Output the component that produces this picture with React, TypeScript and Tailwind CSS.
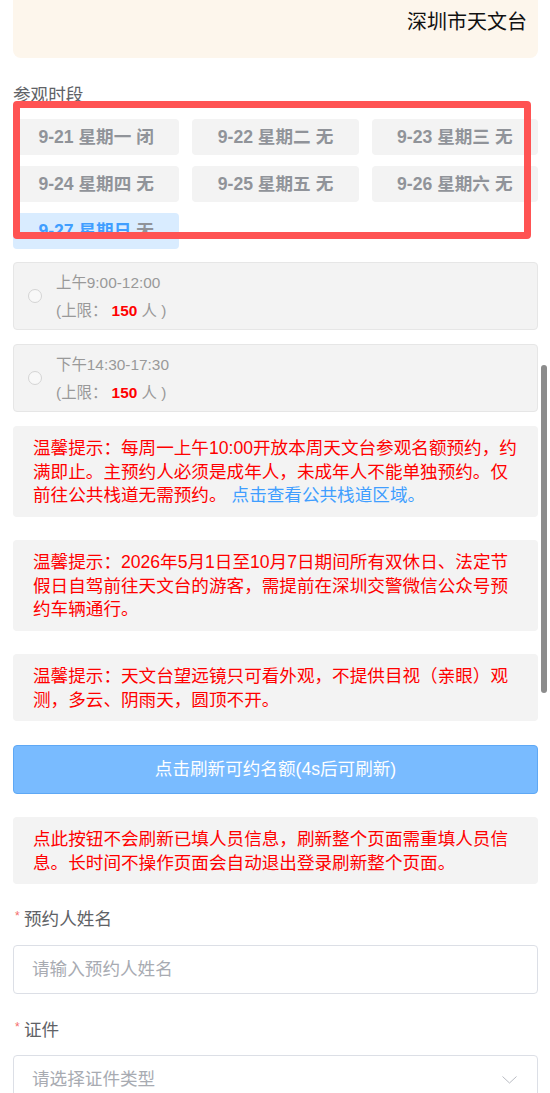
import React from 'react';

const days = [
  { date: '9-21', week: '星期一', state: '闭' },
  { date: '9-22', week: '星期二', state: '无' },
  { date: '9-23', week: '星期三', state: '无' },
  { date: '9-24', week: '星期四', state: '无' },
  { date: '9-25', week: '星期五', state: '无' },
  { date: '9-26', week: '星期六', state: '无' },
  { date: '9-27', week: '星期日', state: '无', active: true },
];

const slots = ['上午9:00-12:00', '下午14:30-17:30'];

function Notice({ children }: { children: React.ReactNode }) {
  return (
    <div className="rounded-[4px] bg-[#f3f3f3] pl-[20px] pr-[16px] pt-[11px] pb-[9px] text-[17.6px] leading-[23.5px] text-[#ff0000]">
      {children}
    </div>
  );
}

function Label({ text }: { text: string }) {
  return (
    <div className="flex items-center h-[24px] text-[17.6px] text-[#606266]">
      <span className="w-[11px] text-[12px] text-[#f56c6c] leading-none -mt-[6px] pl-[2px]">*</span>
      <span>{text}</span>
    </div>
  );
}

export default function App() {
  return (
    <div
      className="relative w-full h-[1093px] bg-white pl-[13px] pr-[12px] overflow-hidden"
      style={{ fontFamily: '"Liberation Sans", "Noto Sans CJK SC", sans-serif' }}
    >
      {/* header */}
      <div className="h-[58px] rounded-b-[8px] bg-[#fdf6ec] pt-[8px] pr-[11px] text-right text-[20px] leading-[28px] text-[#111]">
        深圳市天文台
      </div>

      <div className="mt-[25px] h-[24px] leading-[24px] text-[17.6px] text-[#606266]">参观时段</div>

      <div className="mt-[12px] grid grid-cols-3 gap-x-[13px] gap-y-[11px]">
        {days.map(d => (
          <div
            key={d.date}
            className={`h-[36px] rounded-[4px] flex items-center justify-center text-[17.6px] font-bold ${
              d.active ? 'bg-[#d9ecff] text-[#409eff]' : 'bg-[#f3f3f3] text-[#909399]'
            }`}
          >
            {d.date} {d.week} <span className="ml-[5px] text-[#909399]">{d.state}</span>
          </div>
        ))}
      </div>

      <div className="mt-[13px] flex flex-col gap-[14px]">
        {slots.map(s => (
          <div key={s} className="h-[68px] rounded-[4px] border border-[#e6e6e6] bg-[#f3f3f3] flex items-center pl-[14px]">
            <span className="w-[14px] h-[14px] rounded-full border border-[#d4d4d4] bg-[#f8f8f8]" />
            <div className="ml-[14px] text-[15.4px] text-[#999] leading-[28px] mt-[2px]">
              <div>{s}</div>
              <div>
                (上限： <span className="font-bold text-[#ff0000]">150</span> 人 )
              </div>
            </div>
          </div>
        ))}
      </div>

      <div className="mt-[14px] flex flex-col gap-[23.5px]">
        <Notice>
          温馨提示：每周一上午10:00开放本周天文台参观名额预约，约满即止。主预约人必须是成年人，未成年人不能单独预约。仅前往公共栈道无需预约。<span className="ml-[5px] text-[#409eff]">点击查看公共栈道区域。</span>
        </Notice>
        <Notice>
          温馨提示：2026年5月1日至10月7日期间所有双休日、法定节假日自驾前往天文台的游客，需提前在深圳交警微信公众号预约车辆通行。
        </Notice>
        <Notice>温馨提示：天文台望远镜只可看外观，不提供目视（亲眼）观测，多云、阴雨天，圆顶不开。</Notice>
        <button className="h-[49px] rounded-[4px] border border-[#5ea8f5] bg-[#79bbff] text-[17.6px] text-white">
          点击刷新可约名额(4s后可刷新)
        </button>
        <Notice>点此按钮不会刷新已填人员信息，刷新整个页面需重填人员信息。长时间不操作页面会自动退出登录刷新整个页面。</Notice>
      </div>

      <div className="mt-[23px]">
        <Label text="预约人姓名" />
        <div className="mt-[14px] h-[49px] rounded-[4px] border border-[#dcdfe6] flex items-center pl-[18px] text-[17.6px] text-[#a8abb2]">
          请输入预约人姓名
        </div>
      </div>

      <div className="mt-[24px]">
        <Label text="证件" />
        <div className="mt-[13px] h-[49px] rounded-[4px] border border-[#dcdfe6] flex items-center justify-between pl-[18px] pr-[20px] text-[17.6px] text-[#a8abb2]">
          <span>请选择证件类型</span>
          <svg width="15" height="8" viewBox="0 0 15 8" fill="none">
            <polyline points="0.5,0.5 7.5,7 14.5,0.5" stroke="#b8bbc2" strokeWidth="1" />
          </svg>
        </div>
      </div>

      {/* annotation frame */}
      <div className="absolute left-[13px] top-[101px] w-[518px] h-[138px] rounded-[4px] border-[7px] border-[#ff5353] pointer-events-none" />

      {/* mobile scrollbar */}
      <div className="absolute right-[3px] top-[365px] w-[6px] h-[328px] rounded-full bg-[#8c8c8c]" />
    </div>
  );
}
